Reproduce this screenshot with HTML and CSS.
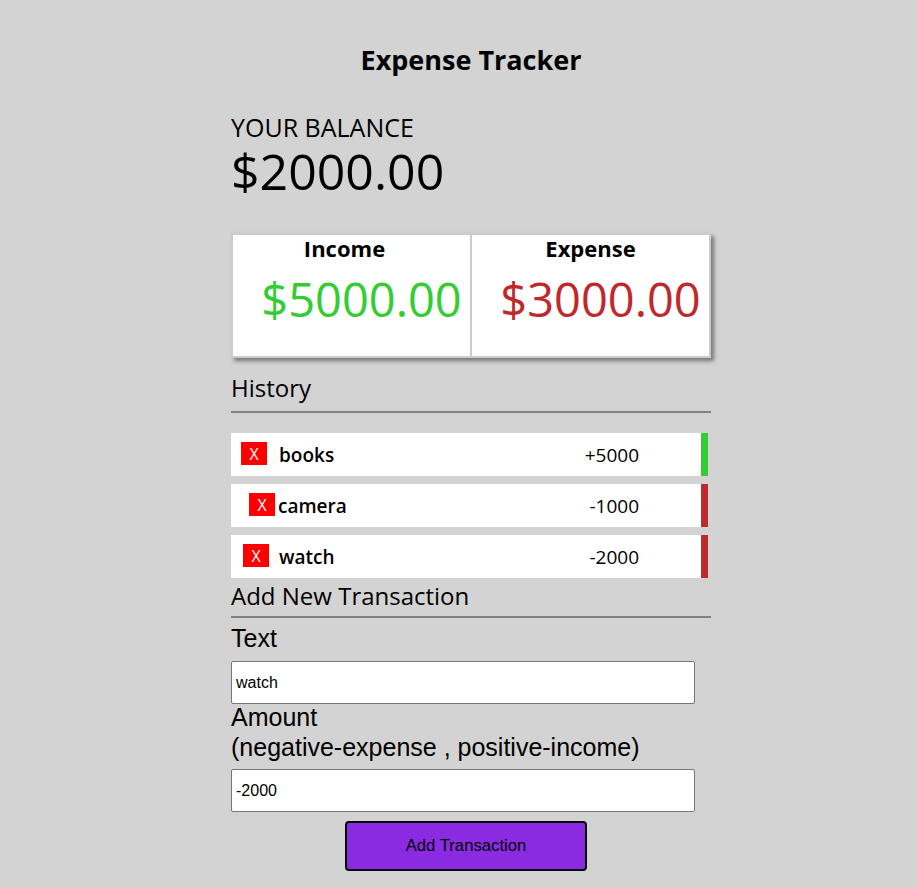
FILE: index.html
```html
<!DOCTYPE html>
<html>
<head>
<meta charset="utf-8">
<link rel="stylesheet" href="styles.css">
</head>
<body>
<div class="app">
  <h2 class="title">Expense Tracker</h2>
  <div class="balance">
    <h4 class="balance-label">YOUR BALANCE</h4>
    <h1 class="balance-value">$2000.00</h1>
  </div>
  <div class="summary">
    <div class="summary-col">
      <h4 class="summary-label">Income</h4>
      <p class="money plus">$5000.00</p>
    </div>
    <div class="summary-col">
      <h4 class="summary-label">Expense</h4>
      <p class="money minus">$3000.00</p>
    </div>
  </div>
  <h3 class="section history">History</h3>
  <ul class="list">
    <li class="item plus"><button class="del">X</button><span class="name">books</span><span class="amt">+5000</span></li>
    <li class="item minus shifted"><button class="del">X</button><span class="name">camera</span><span class="amt">-1000</span></li>
    <li class="item minus mid"><button class="del">X</button><span class="name">watch</span><span class="amt">-2000</span></li>
  </ul>
  <h3 class="section add">Add New Transaction</h3>
  <form class="form">
    <label class="label">Text</label>
    <input class="field" type="text" value="watch">
    <label class="label amount">Amount <br>(negative-expense , positive-income)</label>
    <input class="field" type="text" value="-2000">
    <button type="button" class="btn">Add Transaction</button>
  </form>
</div>
</body>
</html>
```
FILE: styles.css
```css
body {
  margin: 0;
  background: #d3d3d3;
  font-family: "Open Sans", "Noto Sans", sans-serif;
  color: #000;
}
.app {
  width: 480px;
  margin: 0 auto;
  padding: 40px 0 0 25px;
}
.title {
  text-align: center;
  font-size: 27px;
  font-weight: 700;
  margin: 0 0 33px;
  line-height: 40px;
}
.balance-label {
  margin: 0;
  font-size: 25px;
  font-weight: 400;
  line-height: 28px;
}
.balance-value {
  margin: 0;
  font-size: 50px;
  font-weight: 400;
  line-height: 60px;
}
.summary {
  margin-top: 32px;
  display: flex;
  background: #fff;
  border: 2px solid #ccc;
  box-shadow: 3px 3px 4px #777;
  height: 125px;
  box-sizing: border-box;
}
.summary-col {
  flex: 1;
  text-align: center;
}
.summary-col + .summary-col {
  border-left: 2px solid #ccc;
}
.summary-label {
  margin: 0;
  font-size: 22px;
  font-weight: 700;
  line-height: 26px;
}
.summary-col:first-child .summary-label {
  padding-right: 14px;
}
.money {
  margin: 10px 0 0;
  font-size: 47px;
  line-height: 56px;
  padding-left: 20px;
  white-space: nowrap;
}
.money.plus { color: #32cd32; }
.money.minus { color: #c0292c; }
.section {
  font-size: 24px;
  font-weight: 400;
  line-height: 30px;
  border-bottom: 2px solid #808080;
}
.section.history {
  margin: 15px 0 0;
  padding-bottom: 8px;
}
.section.add {
  margin: 3px 0 0;
  padding-bottom: 5px;
}
.list {
  list-style: none;
  margin: 20px 0 0;
  padding: 0;
  display: flex;
  flex-direction: column;
  gap: 8px;
}
.item {
  display: flex;
  align-items: center;
  background: #fff;
  height: 43px;
  margin-right: 3px;
  border-right: 7px solid #32cd32;
  font-size: 19px;
  font-weight: 600;
}
.item.minus { border-right-color: #c0292c; }
.del {
  background: #ff0000;
  color: #fff;
  border: 0;
  width: 26px;
  height: 23px;
  padding: 0;
  font-family: "Open Sans", sans-serif;
  font-size: 16px;
  margin: -2px 12px 0 10px;
}
.item.shifted .del { margin-left: 18px; margin-right: 3px; }
.item.mid .del { margin-left: 12px; margin-right: 10px; }
.name {
  flex: 1;
}
.amt {
  font-weight: 400;
  margin-right: 62px;
}
.form {
  display: flex;
  flex-direction: column;
}
.label {
  font-family: "Liberation Sans", Arial, sans-serif;
  font-size: 25px;
  line-height: 30px;
  margin-top: 5px;
}
.label.amount {
  margin-top: -2px;
}
.field {
  width: 464px;
  height: 43px;
  box-sizing: border-box;
  margin-top: 8px;
  border: 1px solid #767676;
  border-radius: 2px;
  font-family: "Liberation Sans", Arial, sans-serif;
  font-size: 16px;
  padding: 0 4px;
}
.label.amount + .field {
  margin-top: 7px;
}
.btn {
  align-self: center;
  margin-top: 9px;
  margin-left: -10px;
  width: 242px;
  height: 50px;
  background: #8a2be2;
  border: 2px solid #000;
  border-radius: 4px;
  font-family: "Liberation Sans", Arial, sans-serif;
  font-size: 16.7px;
  color: #000;
}
```
